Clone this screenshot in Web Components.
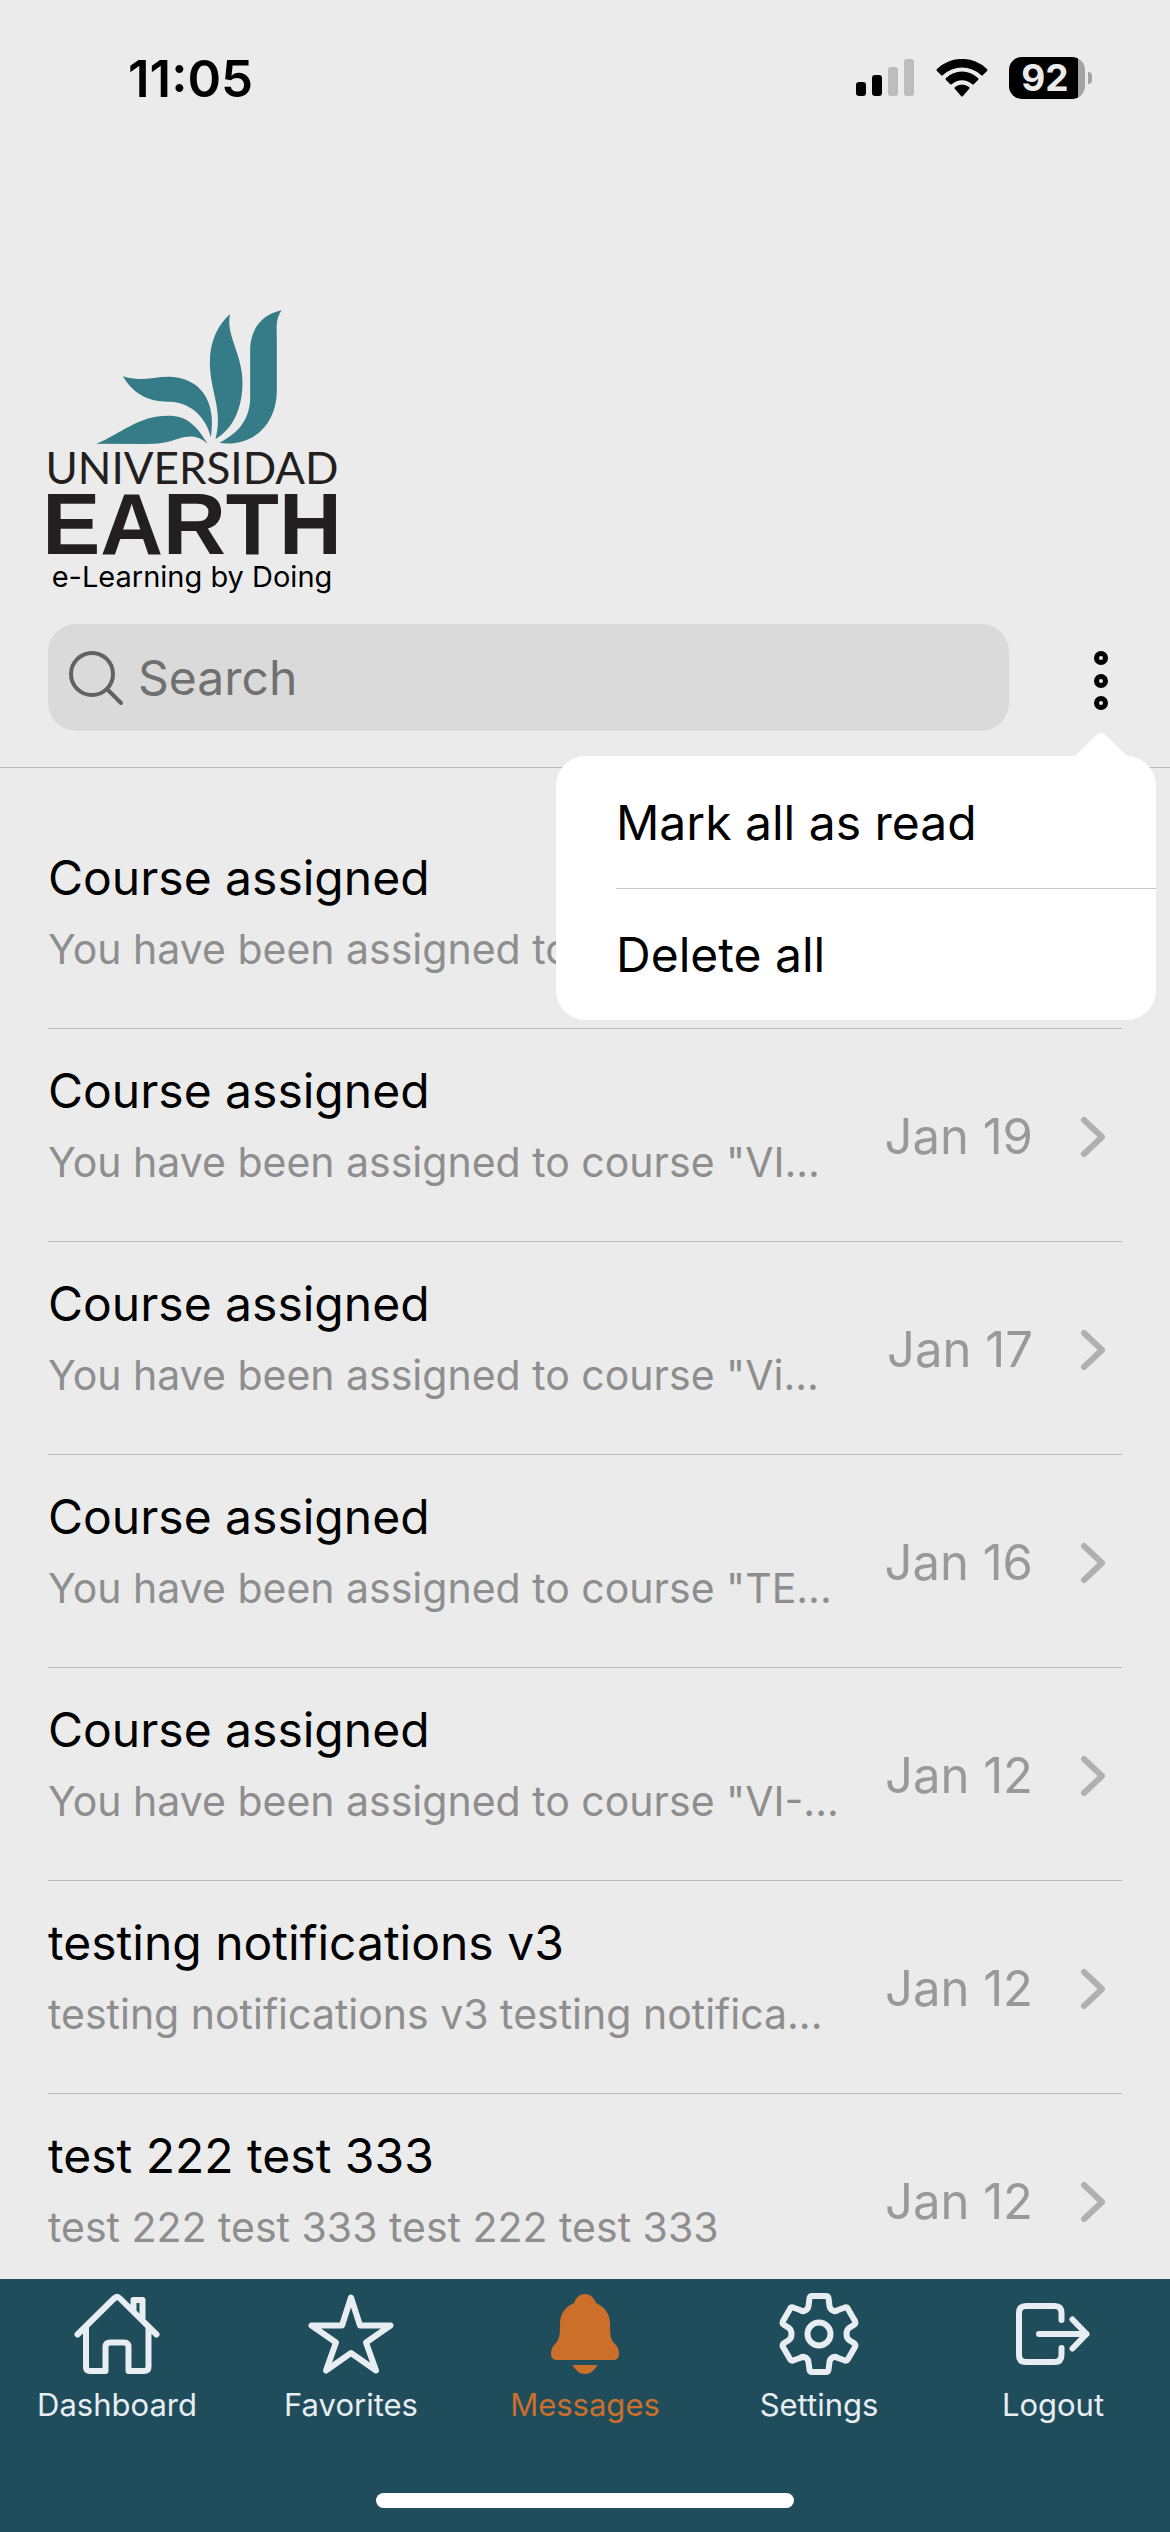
<!DOCTYPE html>
<html lang="en">
<head>
<meta charset="utf-8">
<meta name="viewport" content="width=device-width, initial-scale=1">
<title>Messages</title>
<style>
  html, body { margin: 0; }
  body {
    --page: #ebebeb; --line: #b9b9b9; --muted: #8e8e8e; --bar: #1f4d5c; --accent: #cb6f2b; --gutter: 48px;
    background: var(--page); color: #000; font-family: Inter, "Liberation Sans", sans-serif; font-size: 48px;
  }
</style>
</head>
<body>
<message-app></message-app>

<script>
const define = (name, html) => customElements.define(name, class extends HTMLElement {
  constructor() {
    super();
    const t = document.createElement('template');
    t.innerHTML = html;
    this.attachShadow({ mode: 'open' }).append(t.content.cloneNode(true));
  }
});

define('status-bar', `
<style>
  :host { display: flex; justify-content: space-between; align-items: center; height: 156px; padding: 0 78px 0 128px; }
  time { font-size: 51px; font-weight: 600; }
  .right { display: flex; align-items: center; gap: 21px; }
  svg { display: block; }
  .battery { display: flex; align-items: center; gap: 3px; }
  .cell { display: flex; align-items: center; justify-content: center; box-sizing: border-box; width: 76px; height: 42px; padding-right: 4px;
    border-radius: 13px; background: linear-gradient(90deg, #000 0 69px, #a3a3a3 69px); color: var(--page); font-size: 37px; font-weight: 700; line-height: 42px; }
  .nub { width: 4px; height: 12px; border-radius: 0 6px 6px 0; background: #a3a3a3; }
</style>
<time>11:05</time>
<div class="right">
  <svg width="59" height="38" viewBox="0 0 59 38" aria-hidden="true"><rect y="23" width="10" height="14" rx="3"/><rect x="16" y="16" width="10" height="21" rx="3"/><g fill="#bdbdbd"><rect x="32" y="8" width="10" height="29" rx="3"/><rect x="48" width="10" height="37" rx="3"/></g></svg>
  <svg width="52" height="38" viewBox="0 0 52 38" aria-hidden="true"><path d="M1 12Q0 11 1 10A36 36 0 0 1 51 10Q52 11 51 12L47 16Q46 17 45 16A28 28 0 0 0 7 16Q6 17 5 16ZM10 21Q9 20 10 19A23 23 0 0 1 42 19Q43 20 42 21L38 25Q37 26 36 25A15 15 0 0 0 16 25Q15 26 14 25ZM19 30Q18 29 19 28A11 11 0 0 1 33 28Q34 29 33 30L27 37Q26 38 25 37Z"/></svg>
  <div class="battery"><span class="cell">92</span><span class="nub"></span></div>
</div>`);

define('brand-logo', `
<style>
  :host { display: flex; flex-direction: column; align-items: center; width: 288px; color: #231f20; white-space: nowrap; }
  svg { display: block; margin-left: -6px; fill: #367c88; }
  .uni { font: 400 44px/46px Lato, "Liberation Sans", sans-serif; }
  .earth { font: 700 87px/68px "Liberation Sans", sans-serif; }
  .tag { font: 400 29px/38px Inter, sans-serif; color: #000; }
</style>
<svg width="186" height="134" viewBox="228 58 557 402" aria-hidden="true">
  <path d="M228 459C300 432 350 375 445 375C500 375 530 405 562 459C540 440 520 434 490 440C460 447 440 460 385 460Z"/>
  <path d="M308 257C360 275 400 257 450 258C540 262 590 330 572 440C560 385 515 335 450 333C400 335 345 320 308 257Z"/>
  <path d="M630 70C615 130 667 190 667 275C667 350 640 415 586 445C610 360 569 300 569 215C569 150 595 100 630 70Z"/>
  <path d="M784 59C765 90 770 110 770 150V300C770 390 710 470 597 457C650 430 690 390 690 320V180C690 110 730 70 784 59Z"/>
</svg>
<span class="uni">UNIVERSIDAD</span>
<span class="earth">EARTH</span>
<span class="tag">e-Learning by Doing</span>`);

define('search-field', `
<style>
  :host { display: block; flex: 1; }
  label { display: flex; align-items: center; gap: 13px; height: 107px; padding: 0 21px; border-radius: 28px; background: #dadada; }
  svg { flex: none; }
  input { flex: 1; min-width: 0; padding: 0; border: 0; outline: 0; background: none; color: #000; font: inherit; font-size: 48px; }
  input::placeholder { color: #707070; opacity: 1; }
</style>
<label>
  <svg width="56" height="56" viewBox="0 0 56 56" fill="none" stroke="#626262" stroke-width="4" stroke-linecap="round" aria-hidden="true"><circle cx="23" cy="24" r="21"/><path d="M38 39L52 53"/></svg>
  <input type="search" placeholder="Search" aria-label="Search">
</label>`);

define('option-menu', `
<style>
  :host { display: block; position: relative; }
  .more { display: flex; align-items: center; justify-content: center; width: 72px; height: 107px; padding: 0; border: 0; background: none; }
  .menu { position: absolute; z-index: 2; top: 132px; right: -19px; width: 600px; border-radius: 30px; background: #fff; }
  .tip { position: absolute; top: -24px; right: 28px; fill: #fff; }
  .items { display: flex; flex-direction: column; padding-left: 60px; }
  .items button { height: 132px; padding: 0; border: 0; background: none; color: #000; font: inherit; font-size: 48px; text-align: left; }
  .items button + button { border-top: 1px solid #c6c6c6; }
</style>
<button class="more" aria-label="More options">
  <svg width="16" height="66" viewBox="0 0 16 66" fill="none" stroke="#000" stroke-width="5" aria-hidden="true"><circle cx="8" cy="13" r="4.500"/><circle cx="8" cy="36" r="4.500"/><circle cx="8" cy="58" r="4.500"/></svg>
</button>
<div class="menu">
  <svg class="tip" width="54" height="25" viewBox="0 0 54 25" aria-hidden="true"><path d="M0 25L21 4Q27 -2 33 4L54 25Z"/></svg>
  <div class="items"><button>Mark all as read</button><button>Delete all</button></div>
</div>`);

define('message-row', `
<style>
  :host { display: block; margin: 0 var(--gutter); border-bottom: 1px solid var(--line); }
  a { display: flex; align-items: center; height: 212px; color: inherit; text-decoration: none; white-space: nowrap; }
  .text { display: flex; flex: 1; flex-direction: column; gap: 13px; min-width: 0; padding-bottom: 20px; }
  .title { font-size: 48px; line-height: 60px; }
  .body { font-size: 41px; line-height: 56px; color: var(--muted); }
  .date, svg { margin-top: 4px; }
  .date { color: #999; font-size: 49px; line-height: 60px; }
  svg { flex: none; margin-right: 16px; margin-left: 47px; }
</style>
<a href="#">
  <span class="text"><span class="title"><slot name="title"></slot></span><span class="body"><slot></slot></span></span>
  <span class="date"><slot name="date"></slot></span>
  <svg width="26" height="42" viewBox="0 0 26 42" fill="none" stroke="#b0b0b0" stroke-width="6" stroke-linecap="round" stroke-linejoin="round" aria-hidden="true"><path d="M4 4L22 21L4 38"/></svg>
</a>`);

define('tab-item', `
<style>
  :host { display: block; flex: 1 1 0; color: #e8edf2; }
  :host([current]) { color: var(--accent); }
  a { display: flex; flex-direction: column; align-items: center; gap: 6px; color: inherit; text-decoration: none; font-size: 31px; line-height: 40px; }
</style>
<a href="#"><slot name="icon"></slot><span><slot></slot></span></a>`);

define('tab-bar', `
<style>
  :host { display: flex; flex-direction: column; justify-content: space-between; box-sizing: border-box; height: 253px; padding: 10px 0 24px; background: var(--bar); }
  nav { display: flex; }
  svg { display: block; width: 90px; height: 90px; fill: none; stroke: currentColor; stroke-width: 6; stroke-linecap: round; stroke-linejoin: round; }
  svg.solid { fill: currentColor; stroke: none; }
  .home { align-self: center; width: 418px; height: 15px; border-radius: 8px; background: #fff; }
</style>
<nav>
  <tab-item><svg slot="icon" viewBox="0 0 90 90"><path d="M5.5 45.5L42 9.5Q45 6.500 48 9.500L84.500 45.500M14 38V78Q14 82 18 82H33.500V58Q33.500 53.500 38 53.500H52Q56.500 53.500 56.500 58V82H72Q76.500 82 76.500 78V38M61.500 21V11H70.500V31"/></svg>Dashboard</tab-item>
  <tab-item><svg slot="icon" viewBox="0 0 90 90"><path d="M45 8.500L54 36.500H84.500L60 53.500L70 81.500L45 64L20 81.500L30 53.500L5.500 36.500H36Z"/></svg>Favorites</tab-item>
  <tab-item current><svg slot="icon" class="solid" viewBox="0 0 90 90"><path d="M45 5C51 5 54 9 56 14C65 18 70 25 70 35C70 48 71 51 75 55C78 58 79 61 79 65Q79 71 73 71H17Q11 71 11 65C11 61 12 58 15 55C19 51 20 48 20 35C20 25 25 18 34 14C36 9 39 5 45 5ZM32 75Q31.500 76 35 76H55Q58.500 76 58 75Q53 85 45 85Q37 85 32 75Z"/></svg>Messages</tab-item>
  <tab-item><svg slot="icon" viewBox="0 0 90 90"><circle cx="45" cy="45" r="11.500"/><path d="M38 7H52Q54 7 54.500 9L55.500 17Q56 21 60 22Q62 22.500 64 21L71 18.500Q73 18 74 20L81 32Q82 34 80.500 35.500L75 39Q72.500 41 72.500 45Q72.500 49 75 51L80.500 54.500Q82 56 81 58L74 70Q73 72 71 71.500L64 69Q62 67.500 60 68Q56 69 55.500 73L54.500 81Q54 83 52 83H38Q36 83 35.500 81L34.500 73Q34 69 30 68Q28 67.500 26 69L19 71.500Q17 72 16 70L9 58Q8 56 9.500 54.500L15 51Q17.500 49 17.500 45Q17.500 41 15 39L9.500 35.500Q8 34 9 32L16 20Q17 18 19 18.500L26 21Q28 22.500 30 22Q34 21 34.500 17L35.500 9Q36 7 38 7Z"/></svg>Settings</tab-item>
  <tab-item><svg slot="icon" viewBox="0 0 90 90"><path d="M53.500 31V24Q53.500 17 46.500 17H18Q11 17 11 24V66Q11 73 18 73H46.500Q53.500 73 53.500 66V59M31 45H78.500M64.500 30.500L78.500 45L64.500 59.500"/></svg>Logout</tab-item>
</nav>
<span class="home"></span>`);

define('message-app', `
<style>
  :host { display: flex; flex-direction: column; height: 100vh; overflow: hidden; }
  header { flex: none; border-bottom: 1px solid var(--line); padding-bottom: 36px; }
  brand-logo { margin: 154px 0 28px var(--gutter); }
  .tools { display: flex; align-items: center; gap: 56px; padding: 0 33px 0 var(--gutter); }
  main { flex: 1; min-height: 0; overflow: hidden; padding-top: 48px; }
  tab-bar { flex: none; }
</style>
<header>
  <status-bar></status-bar>
  <brand-logo role="img" aria-label="Universidad EARTH"></brand-logo>
  <div class="tools"><search-field></search-field><option-menu></option-menu></div>
</header>
<main>
  <message-row><span slot="title">Course assigned</span>You have been assigned to</message-row>
  <message-row><span slot="title">Course assigned</span>You have been assigned to course "VI...<span slot="date">Jan 19</span></message-row>
  <message-row><span slot="title">Course assigned</span>You have been assigned to course "Vi...<span slot="date">Jan 17</span></message-row>
  <message-row><span slot="title">Course assigned</span>You have been assigned to course "TE...<span slot="date">Jan 16</span></message-row>
  <message-row><span slot="title">Course assigned</span>You have been assigned to course "VI-...<span slot="date">Jan 12</span></message-row>
  <message-row><span slot="title">testing notifications v3</span>testing notifications v3 testing notifica...<span slot="date">Jan 12</span></message-row>
  <message-row><span slot="title">test 222 test 333</span>test 222 test 333 test 222 test 333<span slot="date">Jan 12</span></message-row>
</main>
<tab-bar></tab-bar>`);
</script>
</body>
</html>
